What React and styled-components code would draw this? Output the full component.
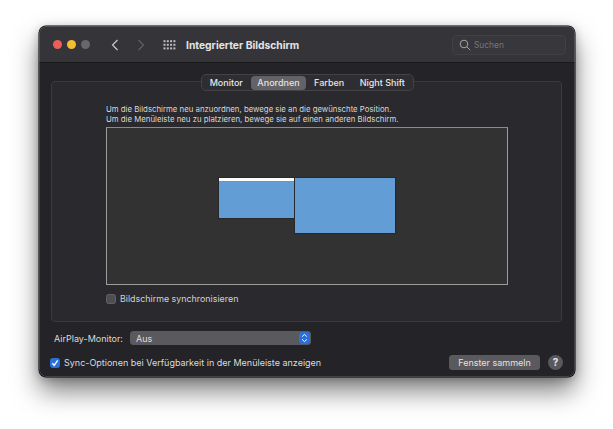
import React from 'react';
import styled, { createGlobalStyle } from 'styled-components';

const Global = createGlobalStyle`
  html, body { margin: 0; padding: 0; background: #fff; }
  body { font-family: Inter, "Liberation Sans", sans-serif; }
  #root { width: 613px; height: 429px; overflow: hidden; }
`

const Page = styled.div`
  width: 613px;
  height: 429px;
  padding: 26px 0 0 39px;
  box-sizing: border-box;
`

const Window = styled.div`
  position: relative;
  width: 536px;
  height: 351px;
  box-sizing: border-box;
  border-radius: 7px;
  background: #242327;
  box-shadow: 0 0 0 0.5px #000, 0 14px 26px rgba(0,0,0,.5), 0 2px 10px rgba(0,0,0,.25);
  display: flex;
  flex-direction: column;
  color: #dcdcdd;
  overflow: hidden;
  &::after {
    content: '';
    position: absolute;
    inset: 0;
    border-radius: 7px;
    box-shadow: inset 0 0 0 1px rgba(255,255,255,.14);
    pointer-events: none;
  }
`

const TitleBar = styled.div`
  height: 37px;
  flex: none;
  box-sizing: border-box;
  background: #353438;
  border-bottom: 1px solid #19181b;
  display: flex;
  align-items: center;
  padding: 1px 9px 0 14px;
`

const Light = styled.span`
  width: 9px;
  height: 9px;
  border-radius: 50%;
  margin-right: 5px;
  background: ${p => p.$color};
`

const NavIcon = styled.svg`
  width: 10px;
  height: 14px;
  fill: none;
  stroke: ${p => p.$dim ? '#616064' : '#c9c9ca'};
  stroke-width: 1.2;
  margin-left: ${p => p.$gap}px;
`

const GridIcon = styled.svg`
  width: 14px;
  height: 12px;
  fill: #bdbdbe;
  margin-left: 17px;
`

const Title = styled.div`
  font-size: 10.3px;
  font-weight: 700;
  color: #e4e4e5;
  margin-left: 9px;
  flex: 1;
`

const Search = styled.div`
  width: 114px;
  height: 20px;
  box-sizing: border-box;
  border: 1px solid #414044;
  border-radius: 4px;
  background: #38373b;
  display: flex;
  align-items: center;
  gap: 3px;
  padding-left: 6px;
  font-size: 8.4px;
  color: #77767a;
`

const Content = styled.div`
  flex: 1;
  padding: 11px 12px 0;
  display: flex;
  flex-direction: column;
`

const Tabs = styled.div`
  align-self: center;
  display: flex;
  align-items: center;
  height: 15px;
  padding: 0 1px 0 0;
  margin: 0 -1px -10px 0;
  background: #2e2d31;
  border: 1px solid #434246;
  border-radius: 5px;
  position: relative;
  z-index: 1;
  font-size: 9px;
  font-weight: 500;
`

const Tab = styled.div`
  height: 14px;
  line-height: 14px;
  padding: 0 ${p => p.$pad}px;
  border-radius: 4px;
  color: ${p => p.$active ? '#e2e2e3' : '#e6e6e7'};
  background: ${p => p.$active ? '#636266' : 'transparent'};
`

const Panel = styled.div`
  height: 241px;
  width: 511px;
  box-sizing: border-box;
  border: 1px solid #3b3a3e;
  border-radius: 4px;
  background: #2a292d;
  padding: 22px 54px 0;
`

const Hint = styled.div`
  font-size: 7.8px;
  line-height: 10px;
  color: #d8d8d9;
  white-space: nowrap;
`

const Canvas = styled.div`
  position: relative;
  width: 402px;
  height: 158px;
  box-sizing: border-box;
  margin-top: 3px;
  background: #323232;
  border: 1px solid #9c9c9c;
  border-top-color: #8a8a8a;
`

const Display = styled.div`
  position: absolute;
  background: #639dd6;
  border: 1px solid #26282b;
  box-sizing: border-box;
`

const MenuBar = styled.div`
  height: 3px;
  background: #fff;
  border-bottom: 1px solid #8d8d8d;
  box-sizing: content-box;
`

const CheckRow = styled.div`
  display: flex;
  align-items: center;
  gap: 4px;
  margin-top: 8px;
  font-size: 8.9px;
  color: #d2d2d3;
`

const CheckBox = styled.span`
  width: 10px;
  height: 10px;
  flex: none;
  box-sizing: border-box;
  border-radius: 2.5px;
  display: flex;
  align-items: center;
  justify-content: center;
  background: ${p => p.$on ? '#2a6fdc' : '#4e4d51'};
  border: 0.5px solid ${p => p.$on ? '#2a6fdc' : '#626165'};
`

const MonitorRow = styled.div`
  display: flex;
  align-items: center;
  height: 14px;
  margin: 9px 0 0 3px;
  font-size: 9px;
`

const MonitorLabel = styled.div`
  width: 76px;
  flex: none;
`

const Select = styled.div`
  width: 181px;
  height: 14px;
  box-sizing: border-box;
  border-radius: 3.5px;
  background: #5a595d;
  display: flex;
  align-items: center;
  justify-content: space-between;
  padding: 0 1px 0 6px;
  color: #dededf;
`

const Stepper = styled.span`
  width: 11px;
  height: 12px;
  border-radius: 3px;
  background: #2a6fdc;
  display: flex;
  align-items: center;
  justify-content: center;
`

const BottomRow = styled.div`
  display: flex;
  align-items: center;
  margin-top: 10px;
  font-size: 9px;
  color: #dcdcdd;
`

const BottomCheck = styled(CheckRow)`
  margin: 0 0 0 -1px;
  flex: 1;
  font-size: 9px;
  color: #dcdcdd;
`

const CollectButton = styled.div`
  width: 91px;
  height: 15px;
  line-height: 15px;
  text-align: center;
  border-radius: 3.5px;
  background: #5a595d;
  color: #e2e2e3;
  margin-right: 8px;
`

const Help = styled.div`
  width: 15px;
  height: 15px;
  line-height: 15px;
  border-radius: 50%;
  text-align: center;
  font-weight: 700;
  font-size: 10px;
  background: #59585c;
  color: #e6e6e7;
`

const Check = () => (
  <svg width="8" height="8" viewBox="0 0 8 8" fill="none" stroke="#fff" strokeWidth="1.4">
    <path d="M1.3 4.2 3.2 6.3 6.7 1.4" />
  </svg>
)

const App = () => (
  <Page>
    <Global />
    <Window>
      <TitleBar>
        <Light $color="#ec5f57" />
        <Light $color="#f4bd2f" />
        <Light $color="#68676b" />
        <NavIcon viewBox="0 0 10 14" $gap={15}><path d="M7.5 2 2.5 7l5 5" /></NavIcon>
        <NavIcon viewBox="0 0 10 14" $gap={16} $dim><path d="M2.5 2l5 5-5 5" /></NavIcon>
        <GridIcon viewBox="0 0 14 12">
          {[0, 1, 2].map(r => [0, 1, 2, 3].map(c => (
            <rect key={`${r}-${c}`} x={c * 3.3 + 0.5} y={r * 3.6 + 1.2} width="2" height="2" />
          )))}
        </GridIcon>
        <Title>Integrierter Bildschirm</Title>
        <Search>
          <svg width="12" height="12" viewBox="0 0 12 12" fill="none" stroke="#a3a2a5" strokeWidth="1">
            <circle cx="5" cy="5" r="3.8" />
            <path d="M8 8l3.2 3.2" />
          </svg>
          Suchen
        </Search>
      </TitleBar>
      <Content>
        <Tabs>
          <Tab $pad={8}>Monitor</Tab>
          <Tab $pad={6.5} $active>Anordnen</Tab>
          <Tab $pad={8}>Farben</Tab>
          <Tab $pad={7.5}>Night Shift</Tab>
        </Tabs>
        <Panel>
          <Hint>Um die Bildschirme neu anzuordnen, bewege sie an die gewünschte Position.</Hint>
          <Hint>Um die Menüleiste neu zu platzieren, bewege sie auf einen anderen Bildschirm.</Hint>
          <Canvas>
            <Display style={{ left: 111, top: 49, width: 77, height: 42 }}><MenuBar /></Display>
            <Display style={{ left: 187, top: 49, width: 102, height: 57 }} />
          </Canvas>
          <CheckRow><CheckBox />Bildschirme synchronisieren</CheckRow>
        </Panel>
        <MonitorRow>
          <MonitorLabel>AirPlay-Monitor:</MonitorLabel>
          <Select>
            Aus
            <Stepper>
              <svg width="7" height="10" viewBox="0 0 7 10" fill="none" stroke="#fff" strokeWidth="1">
                <path d="M1.2 3.6 3.5 1.4l2.3 2.2M1.2 6.4 3.5 8.6l2.3-2.2" />
              </svg>
            </Stepper>
          </Select>
        </MonitorRow>
        <BottomRow>
          <BottomCheck><CheckBox $on><Check /></CheckBox>Sync-Optionen bei Verfügbarkeit in der Menüleiste anzeigen</BottomCheck>
          <CollectButton>Fenster sammeln</CollectButton>
          <Help>?</Help>
        </BottomRow>
      </Content>
    </Window>
  </Page>
)

export default App;
